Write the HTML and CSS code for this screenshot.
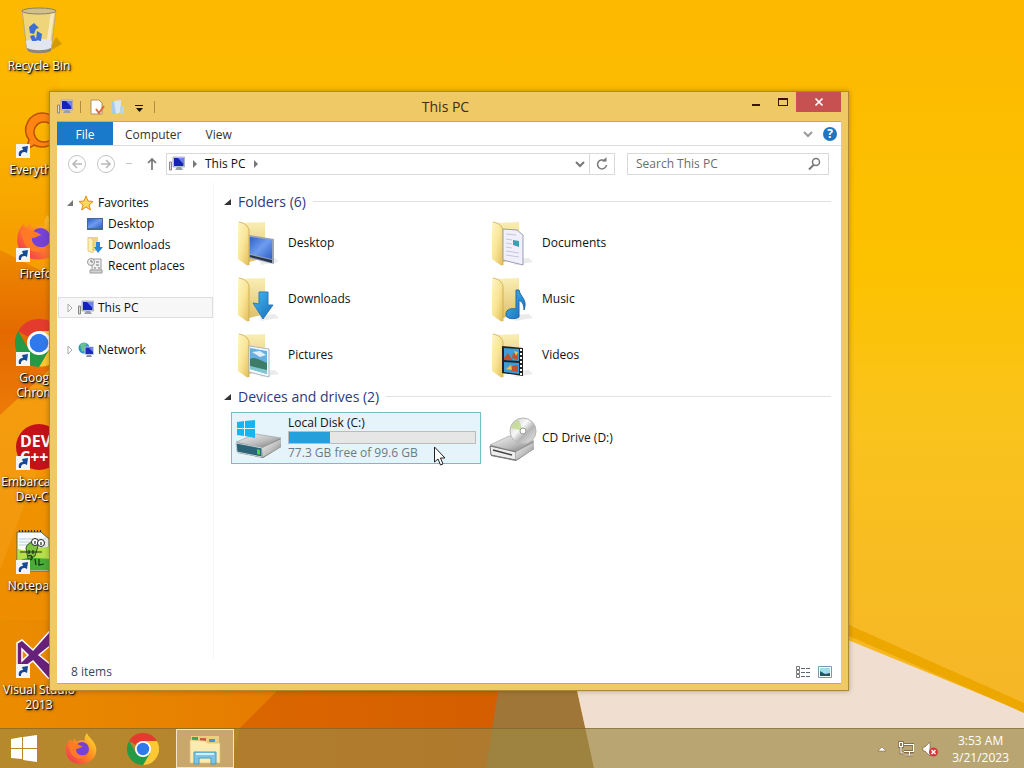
FILE: index.html
```
<!DOCTYPE html>
<html lang="en">

<head>
    <meta charset="UTF-8">
    <meta name="viewport" content="width=device-width, initial-scale=1.0">
    <title>This PC</title>
    <link rel="stylesheet" href="styles.css">
</head>

<body>
    <!-- shared icons -->
    <svg class="sprite" aria-hidden="true">
        <defs>
            <linearGradient id="gold" x1="0" y1="0" x2="1" y2="1">
                <stop offset="0" stop-color="#fff6c4" />
                <stop offset=".5" stop-color="#f9e596" />
                <stop offset="1" stop-color="#e2bd58" />
            </linearGradient>
            <linearGradient id="goldBack" x1="0" y1="0" x2="0" y2="1">
                <stop offset="0" stop-color="#faeeb4" />
                <stop offset="1" stop-color="#dfc067" />
            </linearGradient>
            <linearGradient id="screen" x1="0" y1="0" x2="1" y2="1">
                <stop offset="0" stop-color="#2f62c8" />
                <stop offset=".5" stop-color="#6f9cf0" />
                <stop offset="1" stop-color="#2e5fc2" />
            </linearGradient>
            <linearGradient id="blue" x1="0" y1="0" x2="1" y2="1">
                <stop offset="0" stop-color="#45bdf0" />
                <stop offset="1" stop-color="#1768b8" />
            </linearGradient>
            <linearGradient id="metal" x1="0" y1="0" x2="1" y2="1">
                <stop offset="0" stop-color="#f6f6f6" />
                <stop offset=".55" stop-color="#bdbdbd" />
                <stop offset="1" stop-color="#6e6e6e" />
            </linearGradient>
            <linearGradient id="disc" x1="0" y1="0" x2="1" y2="1">
                <stop offset="0" stop-color="#c8c8c8" />
                <stop offset=".4" stop-color="#f8f8f8" />
                <stop offset=".6" stop-color="#b5b5b5" />
                <stop offset="1" stop-color="#ececec" />
            </linearGradient>
            <linearGradient id="fire" x1="1" y1="0" x2="0" y2="1">
                <stop offset="0" stop-color="#ffe83c" />
                <stop offset=".45" stop-color="#ff9020" />
                <stop offset="1" stop-color="#f0265c" />
            </linearGradient>
        </defs>

        <symbol id="folder" viewBox="0 0 48 48">
            <path d="M26 46l18-3-4-4-16 1z" fill="#000" opacity=".08" />
            <path d="M5 4l25-1v36l-16 4z" fill="url(#goldBack)" />
            <path d="M3 3c6 1 10 4 11 8v35l-2 .5L3 40z" fill="url(#gold)" />
            <path d="M4 3c6 1 9 4 10 8v35" fill="none" stroke="#c9a84c" stroke-width=".8" />
        </symbol>
        <symbol id="arrow-link" viewBox="0 0 14 14">
            <path d="M0 0h14v14H0z" fill="#f4f4f4" />
            <path d="M3 12C2 8 4 6 7 6L6 3l6-1-1 7-2-1C6 8 5 9 5 12z" fill="#164a93" />
        </symbol>
        <symbol id="pc" viewBox="0 0 16 16">
            <path d="M.5 6h2v8h-2z" fill="#dadada" stroke="#888" />
            <path d="M4 1h11.500v10H4z" fill="#cdd3e6" stroke="#8a92b0" stroke-width=".6" />
            <path d="M5 2h9.500v8H5z" fill="#1524b8" />
            <path d="M9 2h5.500v6z" fill="#6f82ee" />
            <path d="M8 11h4l2 3H6z" fill="#9aa0a8" />
        </symbol>
        <symbol id="firefox" viewBox="0 0 32 32">
            <path d="M3 9l2-3 2 3 3-4 1 4c3-2 6-2 9-1-1-3 0-5 2-8 1 4 7 7 9 14 2 9-5 17-15 17S0 25 1 15c0-2 1-4 2-6z" fill="url(#fire)" />
            <circle cx="17" cy="16" r="7" fill="#7542d8" />
            <path d="M3 11c5-2 10 0 15 3-3 0-4 2-7 2 0 7 8 8 13 4-3 8-17 8-19-3z" fill="#ff7a26" />
        </symbol>
        <symbol id="chrome" viewBox="0 0 32 32">
            <path d="M16 16L2.140 8A16 16 0 0 1 29.860 8z" fill="#e33b2e" />
            <path d="M16 16V8h13.860A16 16 0 0 1 16 32l7-12z" fill="#fcc934" />
            <path d="M2.140 8L9 20l14 0-7 12A16 16 0 0 1 2.140 8z" fill="#249a46" />
            <circle cx="16" cy="16" r="8" fill="#fff" />
            <circle cx="16" cy="16" r="6.200" fill="#3079ec" />
        </symbol>
    </svg>

    <div class="desktop">
        <svg class="wallpaper" viewBox="0 0 1024 768" preserveAspectRatio="none" aria-hidden="true">
            <defs>
                <linearGradient id="sky" x1="0" y1="0" x2="0" y2="1">
                    <stop offset="0" stop-color="#fdb800" />
                    <stop offset=".35" stop-color="#fcc200" />
                    <stop offset=".55" stop-color="#fac31c" />
                    <stop offset="1" stop-color="#f4b32a" />
                </linearGradient>
                <linearGradient id="left" x1="0" y1="0" x2="0" y2="1">
                    <stop offset="0" stop-color="#fdb800" stop-opacity="0" />
                    <stop offset=".3" stop-color="#f6a000" />
                    <stop offset="1" stop-color="#ea8600" />
                </linearGradient>
                <linearGradient id="flame" x1="0" y1="0" x2="0" y2="1">
                    <stop offset="0" stop-color="#ee8a00" />
                    <stop offset=".5" stop-color="#e46a00" />
                    <stop offset="1" stop-color="#ec7a08" />
                </linearGradient>
                <linearGradient id="floor" x1="0" y1="0" x2="1" y2="0">
                    <stop offset="0" stop-color="#ea8c00" />
                    <stop offset=".5" stop-color="#e67c00" />
                    <stop offset="1" stop-color="#cf5a00" />
                </linearGradient>
            </defs>
            <path d="M0 0h1024v768H0z" fill="url(#sky)" />
            <path d="M0 0h60v768H0z" fill="url(#left)" />
            <path d="M0 250l60 30v80L0 415z" fill="url(#flame)" />
            <path d="M0 415l60-55v50L0 570z" fill="#f5a01c" opacity=".5" />
            <path d="M0 620h520v148H0z" fill="url(#floor)" />
            <path d="M240 728l60-60h202l-12 100H230z" fill="#d65f00" opacity=".75" />
            <path d="M506 640h60l28 128H486z" fill="#a07638" />
            <path d="M566 640h282l176 72v56H594z" fill="#f0dfd0" />
            <path d="M840 621l184 82v10L840 632z" fill="#eda800" />
        </svg>

        <main class="screen">
            <div class="shortcuts">
                <a class="shortcut" href="#">
                    <svg class="shortcut__icon" viewBox="0 0 48 48">
                        <path d="M33 45l14-8-6-7z" fill="#8a6400" opacity=".35" />
                        <path d="M7 3h34l-5 40c-3 3-20 3-24 0z" fill="#ecd98f" fill-opacity=".85" stroke="#b8aa82" />
                        <path d="M36 5l3 1-5 37-4 2z" fill="#fff" opacity=".5" />
                        <path d="M11 34c8-3 18-3 26 0l-1 7c-7 3-17 3-24 0z" fill="#e2e6f0" />
                        <path d="M12 41c6 3 18 3 24 0v3c-5 3-19 3-23 0z" fill="#8c8777" />
                        <ellipse cx="24" cy="4" rx="17" ry="3" fill="#d2c08a" stroke="#8d8066" />
                        <path d="M14 20l5-4 5 5-3 1-2 5-4-1zM22 24l5 3-1 7-5-1zM15 29l4-1 3 6-5 0z" fill="#3b6fd0" />
                    </svg>
                    <span class="shortcut__name">Recycle Bin</span>
                </a>
                <a class="shortcut" href="#">
                    <svg class="shortcut__icon" viewBox="0 0 48 48">
                        <path fill-rule="evenodd" d="M28 2a17 17 0 1 1-9 32l-8 5 3-10A17 17 0 0 1 28 2zm1 9a10 10 0 1 0 .1 0z" fill="#ff8414" stroke="#b85200" stroke-width="1.500" />
                        <use href="#arrow-link" x="1" y="33" width="14" height="14" />
                    </svg>
                    <span class="shortcut__name">Everything</span>
                </a>
                <a class="shortcut" href="#">
                    <svg class="shortcut__icon" viewBox="0 0 48 48">
                        <use href="#firefox" x="1" y="0" width="46" height="46" />
                        <use href="#arrow-link" x="1" y="33" width="14" height="14" />
                    </svg>
                    <span class="shortcut__name">Firefox</span>
                </a>
                <a class="shortcut" href="#">
                    <svg class="shortcut__icon" viewBox="0 0 48 48">
                        <use href="#chrome" x="0" y="0" width="48" height="48" />
                        <use href="#arrow-link" x="1" y="33" width="14" height="14" />
                    </svg>
                    <span class="shortcut__name">Google Chrome</span>
                </a>
                <a class="shortcut" href="#">
                    <svg class="shortcut__icon" viewBox="0 0 48 48">
                        <circle cx="24" cy="24" r="23" fill="#c41218" />
                        <text class="dev" x="5" y="24">DEV</text>
                        <text class="dev" x="5" y="40">C++</text>
                        <use href="#arrow-link" x="1" y="33" width="14" height="14" />
                    </svg>
                    <span class="shortcut__name">Embarcadero Dev-C++</span>
                </a>
                <a class="shortcut" href="#">
                    <svg class="shortcut__icon" viewBox="0 0 48 48">
                        <path d="M2 5h24l8 7v32H2z" fill="#fafafa" stroke="#4d6a4a" />
                        <path d="M4 12h27M4 15h27M4 18h27" stroke="#b9d2d8" />
                        <path d="M3 22c10 4 20-4 31-2v23H3z" fill="#b6e04b" />
                        <path d="M3 34c9-5 20-3 31-2v11H3z" fill="#48ad36" />
                        <path d="M4 4h22" stroke="#333" stroke-width="2" stroke-dasharray="1 2" />
                        <path d="M11 21c2-7 9-7 12-2l-3 10-7 3z" fill="#7cc43d" stroke="#31521f" />
                        <circle cx="20" cy="15" r="3.500" fill="#fff" stroke="#222" />
                        <circle cx="26" cy="16" r="3.500" fill="#fff" stroke="#222" />
                        <path d="M20 14v3M26 15v3M5 25h22M14 23v4M18 23v4M13 29c4-2 6 3 2 4M20 32l1 6M24 32v6l5-1" fill="none" stroke="#1d2d12" stroke-width="1.200" />
                        <use href="#arrow-link" x="1" y="33" width="14" height="14" />
                    </svg>
                    <span class="shortcut__name">Notepad++</span>
                </a>
                <a class="shortcut" href="#">
                    <svg class="shortcut__icon" viewBox="0 0 48 48">
                        <path d="M2 12l5-3 11 10L34 1l12 5v37l-12 5-16-18L7 38l-5-3zm5 6v12l6-6zm17 6l11 9V15z" fill="#68217a" fill-rule="evenodd" stroke="#fff" stroke-width="1.500" />
                        <use href="#arrow-link" x="1" y="33" width="14" height="14" />
                    </svg>
                    <span class="shortcut__name">Visual Studio 2013</span>
                </a>
            </div>

            <section class="window">
                <header class="titlebar">
                    <div class="titlebar__tools">
                        <svg class="icon" viewBox="0 0 16 16"><use href="#pc" /></svg>
                        <span class="titlebar__line"></span>
                        <button class="plain" aria-label="Properties">
                            <svg class="icon" viewBox="0 0 16 16">
                                <path d="M2 1h8l3 3v11H2z" fill="#fff" stroke="#b19063" />
                                <path d="M7 10l3 4 5-7" fill="none" stroke="#dc6a3c" stroke-width="2" />
                            </svg>
                        </button>
                        <button class="plain" aria-label="New folder">
                            <svg class="icon" viewBox="0 0 16 16">
                                <path d="M2 2h5v13H2z" fill="#a9c9e6" />
                                <path d="M4 2l7-1v12l-5 2z" fill="#d7e8f4" />
                                <path d="M10 7h4v8h-4z" fill="#bfd2de" />
                            </svg>
                        </button>
                        <button class="plain" aria-label="Customize toolbar">
                            <svg class="icon" viewBox="0 0 16 16"><path d="M4 6h8v1H4zM5 9h7l-3.500 4z" fill="#1c1408" /></svg>
                        </button>
                        <span class="titlebar__line"></span>
                    </div>
                    <h1 class="titlebar__name">This PC</h1>
                    <div class="titlebar__controls">
                        <button class="control" aria-label="Minimize">
                            <svg viewBox="0 0 12 12"><path d="M2 8h8v2H2z" fill="#3d1208" /></svg>
                        </button>
                        <button class="control" aria-label="Maximize">
                            <svg viewBox="0 0 12 12"><path d="M1 2h10v8H1zm1 2v5h8V4z" fill="#3d1208" fill-rule="evenodd" /></svg>
                        </button>
                        <button class="control control--close" aria-label="Close">
                            <svg viewBox="0 0 12 12"><path d="M2.500 2.500l7 7M9.500 2.500l-7 7" stroke="#fff" stroke-width="1.700" /></svg>
                        </button>
                    </div>
                </header>

                <div class="window__body">
                    <nav class="tabs">
                        <button class="tab tab--file">File</button>
                        <button class="tab">Computer</button>
                        <button class="tab">View</button>
                        <div class="tabs__right">
                            <button class="plain" aria-label="Expand ribbon">
                                <svg class="icon" viewBox="0 0 16 16"><path d="M4 6l4 4 4-4" fill="none" stroke="#999" stroke-width="2" /></svg>
                            </button>
                            <button class="help" aria-label="Help">?</button>
                        </div>
                    </nav>

                    <div class="navbar">
                        <button class="plain navbar__back" aria-label="Back">
                            <svg class="navbar__round" viewBox="0 0 20 20">
                                <circle cx="10" cy="10" r="8.500" fill="none" stroke="#c4c4c4" />
                                <path d="M15 10H6M10 6l-4 4 4 4" fill="none" stroke="#bababa" stroke-width="1.700" />
                            </svg>
                        </button>
                        <button class="plain" aria-label="Forward">
                            <svg class="navbar__round" viewBox="0 0 20 20">
                                <circle cx="10" cy="10" r="8.500" fill="none" stroke="#c4c4c4" />
                                <path d="M5 10h9M10 6l4 4-4 4" fill="none" stroke="#bababa" stroke-width="1.700" />
                            </svg>
                        </button>
                        <button class="plain" aria-label="Recent locations">
                            <svg class="icon" viewBox="0 0 16 16"><path d="M4 7h6v1H4z" fill="#c4c4c4" /></svg>
                        </button>
                        <button class="plain" aria-label="Up">
                            <svg class="icon" viewBox="0 0 16 16"><path d="M8 14V3M4 7l4-4 4 4" fill="none" stroke="#777" stroke-width="1.700" /></svg>
                        </button>
                        <div class="address">
                            <svg class="icon" viewBox="0 0 16 16"><use href="#pc" /></svg>
                            <svg class="address__arrow" viewBox="0 0 8 8"><path d="M2 0l4 4-4 4z" fill="#777" /></svg>
                            <a class="address__part" href="#">This PC</a>
                            <svg class="address__arrow" viewBox="0 0 8 8"><path d="M2 0l4 4-4 4z" fill="#777" /></svg>
                            <div class="address__buttons">
                                <button class="plain" aria-label="Previous locations">
                                    <svg class="icon" viewBox="0 0 16 16"><path d="M4 6l4 4 4-4" fill="none" stroke="#777" stroke-width="2" /></svg>
                                </button>
                                <button class="plain address__refresh" aria-label="Refresh">
                                    <svg class="icon" viewBox="0 0 16 16">
                                        <path d="M11 5a4.500 4.500 0 1 0 1.500 4" fill="none" stroke="#777" stroke-width="1.500" />
                                        <path d="M8 5.500h4.500V1z" fill="#777" />
                                    </svg>
                                </button>
                            </div>
                        </div>
                        <label class="search">
                            <input class="search__input" type="text" placeholder="Search This PC" aria-label="Search This PC">
                            <svg class="icon" viewBox="0 0 16 16">
                                <circle cx="10" cy="6" r="3.500" fill="none" stroke="#777" stroke-width="1.500" />
                                <path d="M7.500 9L3 13.500" stroke="#777" stroke-width="2" />
                            </svg>
                        </label>
                    </div>

                    <div class="content">
                        <aside class="tree">
                            <a class="tree__row" href="#">
                                <svg class="tree__toggle" viewBox="0 0 8 8"><path d="M7 1v6H1z" fill="#777" /></svg>
                                <svg class="icon" viewBox="0 0 16 16"><path d="M8 1l2 5 5 .5-4 3.500 1.500 5L8 12l-4.500 3L5 10 1 6.500 6 6z" fill="#ffd75a" stroke="#e08a1c" /></svg>
                                Favorites
                            </a>
                            <a class="tree__row tree__row--child" href="#">
                                <svg class="icon" viewBox="0 0 16 16">
                                    <path d="M0 2h16v12H0z" fill="#46669e" />
                                    <path d="M1 3h14v9H1z" fill="url(#screen)" />
                                </svg>
                                Desktop
                            </a>
                            <a class="tree__row tree__row--child" href="#">
                                <svg class="icon" viewBox="0 0 16 16">
                                    <path d="M1 0h10v14H1z" fill="#efd67c" />
                                    <path d="M1 0l5 2v14l-5-2z" fill="#fbefb2" stroke="#d9bb5b" stroke-width=".7" />
                                    <path d="M9 5h4v5h3l-5 6-4-6h2z" fill="#2587d8" />
                                </svg>
                                Downloads
                            </a>
                            <a class="tree__row tree__row--child" href="#">
                                <svg class="icon" viewBox="0 0 16 16">
                                    <path d="M5 1h9v12H5z" fill="#f0f0f0" stroke="#9a9a9a" />
                                    <path d="M3 12h12v3H3z" fill="#d4d4d4" stroke="#9a9a9a" />
                                    <circle cx="4" cy="4" r="3.500" fill="#eee" stroke="#999" />
                                    <path d="M4 2v2h2M9 4h3M9 7h3M7 10h2M11 10h2" fill="none" stroke="#777" />
                                </svg>
                                Recent places
                            </a>
                            <a class="tree__row tree__row--top tree__row--active" href="#">
                                <svg class="tree__toggle" viewBox="0 0 8 8"><path d="M2 0l4 4-4 4z" fill="#fff" stroke="#aaa" /></svg>
                                <svg class="icon" viewBox="0 0 16 16"><use href="#pc" /></svg>
                                This PC
                            </a>
                            <a class="tree__row tree__row--top" href="#">
                                <svg class="tree__toggle" viewBox="0 0 8 8"><path d="M2 0l4 4-4 4z" fill="#fff" stroke="#aaa" /></svg>
                                <svg class="icon" viewBox="0 0 16 16">
                                    <circle cx="6" cy="6" r="5.500" fill="#2c94c4" />
                                    <path d="M2 3c2-3 5-2 7-1L6 5l1 3-3 2z" fill="#69c28c" />
                                    <path d="M7 5h8.500v7.500H7z" fill="#1a2bbb" stroke="#c4cbe4" />
                                    <path d="M11 6h4v4z" fill="#6f82ee" />
                                    <path d="M9 13h4l1 2H8z" fill="#8a8f98" />
                                </svg>
                                Network
                            </a>
                        </aside>

                        <div class="files">
                            <h2 class="group">
                                <svg class="group__toggle" viewBox="0 0 8 8"><path d="M8 1v6H1z" fill="#333" /></svg>
                                Folders (6)
                            </h2>
                            <div class="items">
                                <a class="item" href="#">
                                    <svg class="item__icon" viewBox="0 0 48 48">
                                        <use href="#folder" />
                                        <path d="M14 16l25 4v25l-25-6z" fill="#9aa5b5" />
                                        <path d="M15 18l22 3v19l-22-5z" fill="url(#screen)" />
                                        <path d="M15 36l22 5v3l-22-6z" fill="#27354f" />
                                    </svg>
                                    Desktop
                                </a>
                                <a class="item" href="#">
                                    <svg class="item__icon" viewBox="0 0 48 48">
                                        <use href="#folder" />
                                        <path d="M14 10l14 1 6 5v30l-20-5z" fill="#f1eff9" stroke="#9a9cb8" />
                                        <path d="M17 15l10 1M17 20l6 1M17 24l6 1M17 28l6 1M17 32l13 2M17 36l13 2" stroke="#c3c5dc" />
                                        <path d="M24 21l6 1v6l-6-2z" fill="#3e9fb0" />
                                    </svg>
                                    Documents
                                </a>
                                <a class="item" href="#">
                                    <svg class="item__icon" viewBox="0 0 48 48">
                                        <use href="#folder" />
                                        <path d="M24 17h9v13h5L28 44 18 28l6 1z" fill="url(#blue)" stroke="#2b7dbd" />
                                    </svg>
                                    Downloads
                                </a>
                                <a class="item" href="#">
                                    <svg class="item__icon" viewBox="0 0 48 48">
                                        <use href="#folder" />
                                        <path d="M27 15h3c1 7 9 9 5 20 0-6-2-8-5-10v17c-4 3-14 2-13-3 0-5 6-6 10-5z" fill="url(#blue)" stroke="#2168ad" />
                                    </svg>
                                    Music
                                </a>
                                <a class="item" href="#">
                                    <svg class="item__icon" viewBox="0 0 48 48">
                                        <use href="#folder" />
                                        <path d="M14 15l20 3v28l-20-5z" fill="#f6fafc" stroke="#a7b7c0" />
                                        <path d="M15 17l17 3v23l-17-5z" fill="#69aee0" />
                                        <path d="M15 28c5-3 11 2 17 4v8l-17-5z" fill="#3d7d68" />
                                        <path d="M15 35l17 4v4l-17-5z" fill="#7fc6cf" />
                                        <path d="M17 21l8-1 6 4-6 2z" fill="#fff" opacity=".8" />
                                    </svg>
                                    Pictures
                                </a>
                                <a class="item" href="#">
                                    <svg class="item__icon" viewBox="0 0 48 48">
                                        <use href="#folder" />
                                        <path d="M13 15l21 2v28l-21-3z" fill="#222" />
                                        <path d="M15 17l15 1v12l-15-1zM15 31l15 1v11l-15-2z" fill="#3c9fda" />
                                        <path d="M15 27l4-5 3 5 2 2-9 0zM24 22l5 1v6l-6-2zM23 35l6-1v7l-7-1z" fill="#c3512c" />
                                        <path d="M25 20l4 1-2 4zM17 38l5-4 1 5z" fill="#f0be4b" />
                                        <path d="M32 18v26" stroke="#fff" stroke-width="2" stroke-dasharray="2 2" />
                                    </svg>
                                    Videos
                                </a>
                            </div>

                            <h2 class="group">
                                <svg class="group__toggle" viewBox="0 0 8 8"><path d="M8 1v6H1z" fill="#333" /></svg>
                                Devices and drives (2)
                            </h2>
                            <div class="items">
                                <a class="item item--hover" href="#">
                                    <svg class="item__icon" viewBox="0 0 48 48">
                                        <path d="M1 29l20-8 25 4v8L28 44 3 39z" fill="#6e7377" />
                                        <path d="M1 28l20-8 25 4-19 10z" fill="url(#metal)" stroke="#999" stroke-width=".6" />
                                        <path d="M1 29l26 5v9L2 38z" fill="#2b6378" stroke="#c9d3d6" stroke-width="1" />
                                        <path d="M27 34l19-9v8L28 43z" fill="url(#metal)" />
                                        <path d="M22 35l3 1v5l-3-1z" fill="#4bd23a" />
                                        <path d="M2 8l7-1v7H2zM10 7l10-1v8H10zM2 15h7v7l-7-1zM10 15h10v9l-10-2z" fill="#12b6f0" />
                                    </svg>
                                    <span class="drive">
                                        <span>Local Disk (C:)</span>
                                        <span class="drive__bar"><span class="drive__used" style="width: 22%"></span></span>
                                        <span class="drive__free">77.3 GB free of 99.6 GB</span>
                                    </span>
                                    <svg class="cursor" viewBox="0 0 12 20" aria-hidden="true">
                                        <path d="M.5 1v15l3.500-3 2.500 6 2.500-1-2.500-6H11z" fill="#fff" stroke="#222" />
                                    </svg>
                                </a>
                                <a class="item" href="#">
                                    <svg class="item__icon" viewBox="0 0 48 48">
                                        <path d="M1 32l19-9 25 5v7L27 47 2 42z" fill="#777" />
                                        <path d="M1 31l19-9 25 5-18 11z" fill="url(#metal)" stroke="#999" stroke-width=".6" />
                                        <circle cx="34" cy="17" r="13" fill="url(#disc)" stroke="#b5b5b5" />
                                        <path d="M34 17L22 14c2-5 5-8 8-8z" fill="#b8d880" opacity=".7" />
                                        <circle cx="34" cy="17" r="3" fill="#fff" stroke="#999" />
                                        <path d="M1 32l26 6v8L2 41z" fill="#eee" stroke="#777" />
                                        <path d="M4 36l19 5" stroke="#444" stroke-width="1.500" />
                                        <path d="M27 38l18-10v7L27 46z" fill="url(#metal)" />
                                    </svg>
                                    CD Drive (D:)
                                </a>
                            </div>
                        </div>
                    </div>

                    <footer class="status">
                        <span>8 items</span>
                        <div class="status__views">
                            <button class="plain" aria-label="Details view">
                                <svg class="icon" viewBox="0 0 16 16">
                                    <path d="M1.500 2.500h3v3h-3zM1.500 6.500h3v3h-3zM1.500 10.500h3v3h-3z" fill="#fff" stroke="#777" />
                                    <path d="M6 4.500h4M11 4.500h4M6 8.500h4M11 8.500h4M6 12.500h4M11 12.500h4" stroke="#5a6872" />
                                </svg>
                            </button>
                            <button class="plain" aria-label="Large icons view">
                                <svg class="icon" viewBox="0 0 16 16">
                                    <path d="M1.500 2.500h13v11h-13z" fill="#fff" stroke="#7a98b4" />
                                    <path d="M3 4h10v8H3z" fill="#a5dbe8" />
                                    <path d="M3 7l5 3 5-1v3H3z" fill="#1c5b64" />
                                </svg>
                            </button>
                        </div>
                    </footer>
                </div>
            </section>
        </main>

        <footer class="taskbar">
            <button class="task task--start" aria-label="Start">
                <svg class="task__icon" viewBox="0 0 32 32">
                    <path d="M3 6l11-2v11H3zM15 4l14-2v13H15zM3 16h11v10L3 25zM15 16h14v13l-14-2z" fill="#fff" />
                </svg>
            </button>
            <button class="task" aria-label="Firefox">
                <svg class="task__icon" viewBox="0 0 32 32"><use href="#firefox" /></svg>
            </button>
            <button class="task" aria-label="Google Chrome">
                <svg class="task__icon" viewBox="0 0 32 32"><use href="#chrome" /></svg>
            </button>
            <button class="task task--open" aria-label="File Explorer">
                <svg class="task__icon" viewBox="0 0 32 32">
                    <path d="M2 3h28v25H2z" fill="#e9cf7f" />
                    <path d="M3 4h6v3H3z" fill="#3aa655" />
                    <path d="M11 5h6v3h-6z" fill="#d2554a" />
                    <path d="M20 6h6v3h-6z" fill="#4a93d6" />
                    <path d="M1 7l15 1 3 2h12v20H1z" fill="#fbebae" stroke="#dcbf70" stroke-width=".7" />
                    <path d="M5 31V19h22v12h-5v-6H10v6z" fill="#7cc4e4" stroke="#4c9dc4" />
                    <path d="M7 21h18" stroke="#d2f0fa" stroke-width="2" />
                </svg>
            </button>
            <div class="tray">
                <button class="plain" aria-label="Show hidden icons">
                    <svg class="icon" viewBox="0 0 16 16"><path d="M4 10l4-4 4 4z" fill="#fff" stroke="#7a5b36" stroke-width=".5" /></svg>
                </button>
                <svg class="icon" viewBox="0 0 16 16">
                    <path d="M6 3.500h9.500v7H6M11.500 11v3M7 14h8M1.500 1.500h3v4h-3zM3 6v6h3" fill="none" stroke="#5a3f22" stroke-width="2.500" opacity=".7" />
                    <path d="M6 3.500h9.500v7H6M11.500 11v3M7 14h8M1.500 1.500h3v4h-3zM3 6v6h3" fill="none" stroke="#fff" stroke-width="1.200" />
                </svg>
                <svg class="icon" viewBox="0 0 16 16">
                    <path d="M1 6h2l5-5v14l-5-5H1z" fill="#fff" stroke="#75572f" stroke-width=".6" />
                    <circle cx="11.500" cy="11" r="4.500" fill="#d4383a" />
                    <path d="M9.500 9l4 4M13.500 9l-4 4" stroke="#fff" stroke-width="1.500" />
                </svg>
                <time class="clock">3:53 AM<br>3/21/2023</time>
            </div>
        </footer>
    </div>
</body>

</html>
```
FILE: styles.css
```
* {
    box-sizing: border-box;
}

body {
    margin: 0;
    font-family: 'Open Sans', 'Noto Sans', sans-serif;
    font-size: 12px;
    line-height: 16px;
    color: #111;
}

a {
    text-decoration: none;
    color: inherit;
}

button,
input {
    font: inherit;
    color: inherit;
}

h1,
h2 {
    margin: 0;
    font-weight: 400;
}

svg {
    display: block;
    flex: none;
}

.sprite {
    position: absolute;
    width: 0;
    height: 0;
}

.plain {
    display: flex;
    padding: 0;
    border: 0;
    background: none;
}

.icon {
    width: 16px;
    height: 16px;
}

.desktop {
    position: relative;
    display: flex;
    flex-direction: column;
    min-height: 100vh;
    overflow: hidden;
}

.wallpaper {
    position: absolute;
    width: 100%;
    height: 100%;
}

.screen {
    position: relative;
    flex: 1;
}

/* desktop shortcuts */
.shortcuts {
    display: grid;
    grid-auto-rows: 104px;
    width: 78px;
}

.shortcut {
    display: flex;
    flex-direction: column;
    align-items: center;
    padding-top: 7px;
    gap: 3px;
}

.shortcut__icon {
    width: 48px;
    height: 48px;
}

.shortcut__name {
    line-height: 15px;
    text-align: center;
    color: #fff;
    text-shadow: 1px 1px 1px #000, 1px 1px 3px #000;
}

.dev {
    font-family: 'Open Sans', sans-serif;
    font-size: 16px;
    font-weight: 700;
    fill: #fff;
}

/* explorer window */
.window {
    position: absolute;
    top: 91px;
    right: 175px;
    bottom: 37px;
    left: 49px;
    display: flex;
    flex-direction: column;
    padding: 0 7px 6px;
    border: 1px solid #ad8833;
    background: #efc965;
    box-shadow: 0 0 5px rgba(80, 50, 0, .4);
}

.titlebar {
    display: grid;
    grid-template-columns: 1fr auto 1fr;
    height: 29px;
}

.titlebar__tools {
    display: flex;
    align-items: center;
    gap: 5px;
}

.titlebar__line {
    width: 1px;
    height: 12px;
    margin: 0 3px 0 2px;
    background: #b58a42;
}

.titlebar__name {
    margin-right: 7px;
    font-size: 14px;
    line-height: 29px;
    color: #3c2f16;
}

.titlebar__controls {
    display: flex;
    align-items: flex-start;
    justify-content: flex-end;
}

.control {
    display: flex;
    align-items: center;
    justify-content: center;
    width: 27px;
    height: 20px;
    padding: 0;
    border: 0;
    background: none;
}

.control svg {
    width: 12px;
    height: 12px;
}

.control--close {
    width: 45px;
    background: #c75050;
}

.window__body {
    flex: 1;
    display: flex;
    flex-direction: column;
    border: 1px solid #cfa84c;
    border-width: 1px 0;
    background: #fff;
}

.tabs {
    display: flex;
    height: 24px;
    border-bottom: 1px solid #dadbdc;
}

.tab {
    height: 23px;
    padding: 2px 12px 0;
    border: 0;
    background: none;
    color: #333;
}

.tab--file {
    width: 56px;
    background: #1979ca;
    color: #fff;
}

.tabs__right {
    display: flex;
    align-items: center;
    gap: 7px;
    margin-left: auto;
    padding-right: 4px;
}

.help {
    width: 14px;
    height: 14px;
    padding: 0;
    border: 0;
    border-radius: 50%;
    background: #1f74c4;
    color: #fff;
    font-weight: 700;
    line-height: 14px;
}

.navbar {
    display: flex;
    align-items: center;
    gap: 6px;
    padding: 7px 12px 7px 10px;
}

.navbar__back {
    margin-right: 3px;
}

.navbar__round {
    width: 20px;
    height: 20px;
}

.address {
    flex: 1;
    display: flex;
    align-items: center;
    height: 22px;
    padding-left: 2px;
    gap: 6px;
    border: 1px solid #d9d9d9;
}

.address__arrow {
    width: 8px;
    height: 8px;
}

.address__buttons {
    display: flex;
    align-items: center;
    align-self: stretch;
    gap: 1px;
    margin-left: auto;
}

.address__refresh {
    align-items: center;
    align-self: stretch;
    padding: 0 4px;
    border-left: 1px solid #d9d9d9;
}

.search {
    display: flex;
    align-items: center;
    width: 202px;
    height: 22px;
    margin-left: 6px;
    padding: 0 6px 0 8px;
    border: 1px solid #d9d9d9;
}

.search__input {
    flex: 1;
    min-width: 0;
    padding: 0;
    border: 0;
    outline: 0;
    background: none;
}

.search__input::placeholder {
    color: #6d6d6d;
    opacity: 1;
}

.content {
    flex: 1;
    display: flex;
}

/* folder tree */
.tree {
    width: 157px;
    padding-top: 10px;
    border-right: 1px solid #f7f7f7;
}

.tree__row {
    display: flex;
    align-items: center;
    height: 21px;
    padding-left: 9px;
    gap: 4px;
}

.tree__row--child {
    padding-left: 30px;
    gap: 5px;
}

.tree__row--top {
    margin-top: 21px;
}

.tree__row--active {
    margin-left: 1px;
    padding-left: 7px;
    border: 1px solid #dedede;
    background: #f7f7f7;
}

.tree__toggle {
    width: 8px;
    height: 8px;
}

/* folders and drives */
.files {
    flex: 1;
    padding: 4px 10px 0 9px;
}

.group {
    display: flex;
    align-items: center;
    height: 31px;
    gap: 7px;
    font-size: 14px;
    color: #2b3a80;
}

.group::after {
    content: '';
    flex: 1;
    height: 1px;
    background: #e2e2e2;
}

.group__toggle {
    width: 8px;
    height: 8px;
}

.items {
    display: grid;
    grid-template-columns: repeat(auto-fill, 250px);
    gap: 4px;
    padding-left: 8px;
}

.item {
    position: relative;
    display: flex;
    align-items: center;
    height: 52px;
    padding: 0 4px 0 3px;
    gap: 5px;
    border: 1px solid transparent;
}

.item--hover {
    border-color: #70c0c8;
    background: #e5f3fb;
}

.item__icon {
    width: 48px;
    height: 48px;
}

.drive {
    flex: 1;
    display: flex;
    flex-direction: column;
    padding-bottom: 2px;
    line-height: 17px;
}

.drive__bar {
    height: 13px;
    border: 1px solid #bcbcbc;
    background: #e6e6e6;
}

.drive__used {
    display: block;
    height: 100%;
    background: #26a0da;
}

.drive__free {
    color: #6d7a84;
}

.cursor {
    position: absolute;
    top: 33px;
    left: 202px;
    width: 12px;
    height: 20px;
}

.status {
    display: flex;
    align-items: center;
    justify-content: space-between;
    height: 24px;
    padding: 2px 8px 0 14px;
    color: #39475c;
}

.status__views {
    display: flex;
    gap: 6px;
}

/* taskbar */
.taskbar {
    position: relative;
    display: flex;
    gap: 4px;
    height: 40px;
    border-top: 1px solid rgba(110, 85, 35, .5);
    background: rgba(157, 135, 67, .67);
}

.task {
    display: flex;
    align-items: center;
    justify-content: center;
    width: 58px;
    padding: 0;
    border: 1px solid transparent;
    background: none;
}

.task--start {
    width: 48px;
}

.task--open {
    border-color: #f0e4cc;
    background: rgba(215, 190, 150, .6);
}

.task__icon {
    width: 32px;
    height: 32px;
}

.tray {
    display: flex;
    align-items: center;
    gap: 8px;
    margin-left: auto;
    padding-right: 15px;
}

.clock {
    margin-left: 6px;
    text-align: center;
    line-height: 17px;
    color: #fff;
}
```
